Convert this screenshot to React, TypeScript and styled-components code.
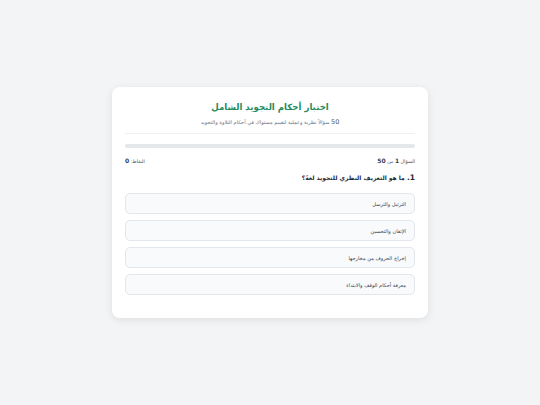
import React from "react";
import styled, { createGlobalStyle } from "styled-components";

const Global = createGlobalStyle`
  html, body { margin: 0; padding: 0; background: #f3f4f6; }
  body { font-family: "DejaVu Sans", "Noto Sans", sans-serif; }
  * { box-sizing: border-box; }
`;

const Page = styled.div`
  width: 540px;
  height: 405px;
  display: flex;
  justify-content: center;
  padding-top: 87px;
  direction: rtl;
`;

const Card = styled.div`
  width: 316px;
  height: 231px;
  background: #ffffff;
  border-radius: 8px;
  box-shadow: 0 2px 8px rgba(0, 0, 0, 0.09);
  padding: 13px 13px 0;
  display: flex;
  flex-direction: column;
`;

const Header = styled.div`
  text-align: center;
  border-bottom: 1px solid #eef0f2;
  padding-bottom: 6px;
`;

const Title = styled.h1`
  margin: 0;
  font-size: 8.6px;
  font-weight: bold;
  color: #1d8c5c;
  line-height: 15px;
`;

const Subtitle = styled.p`
  margin: 3px 0 0;
  font-size: 5.1px;
  color: #6b7280;
  line-height: 9px;
`;

const Lead = styled.span`
  font-size: 6.5px;
  color: #555b63;
`;

const Progress = styled.div`
  margin-top: 10px;
  height: 4px;
  border-radius: 2px;
  background: #e5e7eb;
`;

const InfoRow = styled.div`
  margin-top: 9px;
  display: flex;
  justify-content: space-between;
  align-items: baseline;
  font-size: 4.8px;
  color: #4b5563;
  line-height: 8px;
`;

const Num = styled.b`
  color: #374151;
  font-size: 6px;
`;

const Question = styled.h2`
  margin: 6px 0 0;
  font-size: 6px;
  font-weight: bold;
  color: #1f2937;
  line-height: 12px;
`;

const QNum = styled.span`
  font-size: 7.5px;
`;

const Options = styled.div`
  margin-top: 9px;
  display: flex;
  flex-direction: column;
  gap: 6px;
`;

const Option = styled.div`
  height: 21px;
  border: 1px solid #e3e6ea;
  border-radius: 5px;
  background: #f9fafb;
  display: flex;
  align-items: center;
  padding: 0 8px;
  font-size: 5.1px;
  color: #374151;
`;

const options = [
  "الترتيل والترسل",
  "الإتقان والتحسين",
  "إخراج الحروف من مخارجها",
  "معرفة أحكام الوقف والابتداء",
];

export default function App() {
  return (
    <>
      <Global />
      <Page>
        <Card>
          <Header>
            <Title>اختبار أحكام التجويد الشامل</Title>
            <Subtitle>
              <Lead>50</Lead> سؤالاً نظرية وعملية لتقييم مستواك في أحكام التلاوة والتجويد
            </Subtitle>
          </Header>
          <Progress />
          <InfoRow>
            <span>
              السؤال <Num>1</Num> من <Num>50</Num>
            </span>
            <span>
              النقاط: <Num>0</Num>
            </span>
          </InfoRow>
          <Question>
            <QNum>1.</QNum> ما هو التعريف النظري للتجويد لغةً؟
          </Question>
          <Options>
            {options.map((o) => (
              <Option key={o}>{o}</Option>
            ))}
          </Options>
        </Card>
      </Page>
    </>
  );
}
